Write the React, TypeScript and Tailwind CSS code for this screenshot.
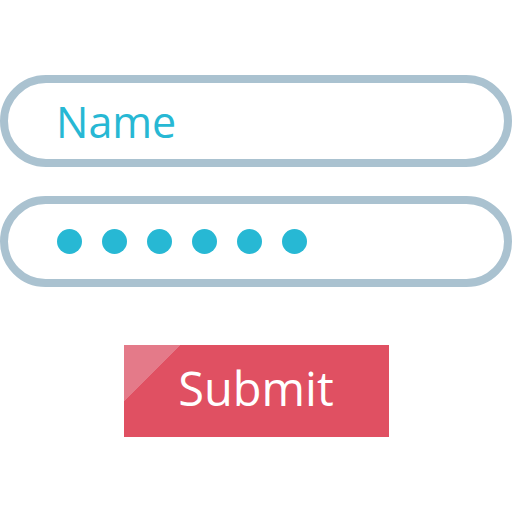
export default function App() {
  const dots = [0, 1, 2, 3, 4, 5];

  return (
    <div className="flex h-[512px] w-[512px] flex-col items-center bg-white pt-[75px] font-['Open_Sans',sans-serif]">
      <div className="flex h-[92px] w-[512px] items-center rounded-full border-[8px] border-[#aac2d0] pl-[48px]">
        <span className="text-[43px] leading-none text-[#27b8d4]">Name</span>
      </div>

      <div className="mt-[29px] flex h-[91px] w-[512px] items-center gap-[20px] rounded-full border-[8px] border-[#aac2d0] pl-[49px]">
        {dots.map((d) => (
          <span key={d} className="h-[25px] w-[25px] rounded-full bg-[#27b8d4]" />
        ))}
      </div>

      <button className="mt-[58px] flex h-[92px] w-[265px] items-center justify-center bg-[linear-gradient(135deg,#e47a89_40px,#e05062_40px)] text-[47px] leading-none text-white">
        <span className="-mt-[6px]">Submit</span>
      </button>
    </div>
  );
}
